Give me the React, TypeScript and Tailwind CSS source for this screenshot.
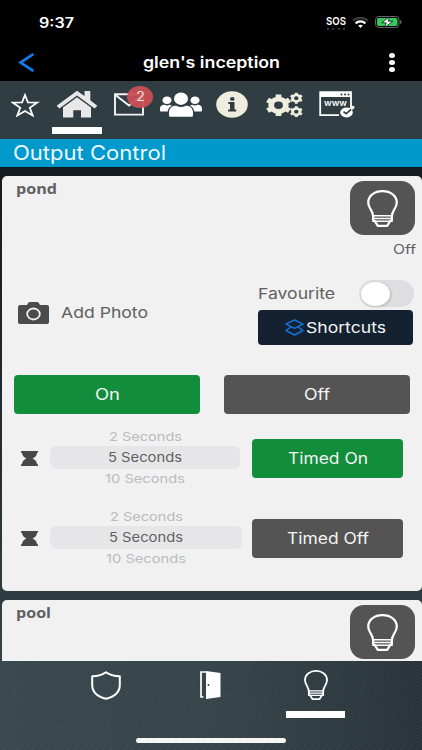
import { useLayoutEffect, useRef, useState } from "react";
import type { ReactNode } from "react";

const inter = "font-['Inter','Liberation_Sans',sans-serif]";
const open = "font-['Open_Sans','Noto_Sans',sans-serif]";

// A single line of text spread horizontally to fill the given width.
function Wide({ w, className = "", children }: { w: number; className?: string; children: string }) {
  const ref = useRef<HTMLSpanElement>(null);
  const [scale, setScale] = useState(1.15);
  useLayoutEffect(() => {
    const fit = () => {
      if (ref.current) setScale(w / ref.current.getBoundingClientRect().width * (new DOMMatrix(getComputedStyle(ref.current).transform).a || 1));
    };
    fit();
    document.fonts?.ready.then(fit);
  }, [w]);
  return (
    <span className={`block shrink-0 text-left ${className}`} style={{ width: w }}>
      <span ref={ref} className="block w-max origin-left whitespace-nowrap" style={{ transform: `scaleX(${scale})` }}>
        {children}
      </span>
    </span>
  );
}

function Bulb({ className, stroke }: { className: string; stroke: number }) {
  return (
    <svg viewBox="0 0 30 37" preserveAspectRatio="none" className={className} fill="none" stroke="#fff" strokeWidth={stroke} strokeLinejoin="round" strokeLinecap="round">
      <path d="M6 31V26.500C6 20.500 1.200 18.500 1.200 12.400C1.200 5.800 7.200 1.200 15 1.200s13.800 4.600 13.800 11.200c0 6.100-4.800 8.100-4.800 14.100V31h-1.500L19.500 35.800H10.500L7.500 31Z" />
      <path d="M6.200 25.800h17.600M6.200 28.500h17.600M7 31.200h16" strokeWidth={stroke * 0.7} />
    </svg>
  );
}

function BulbTile() {
  return (
    <div className="flex h-[54px] w-[65px] items-center justify-center rounded-[14px] bg-[#545454]">
      <Bulb className="h-[37px] w-[31px]" stroke={2.2} />
    </div>
  );
}

function Hourglass() {
  return (
    <svg viewBox="0 0 17 15" className="ml-[19px] h-[15px] w-[17px] shrink-0" fill="#474747">
      <path d="M0 0h17v1.800h-1C15.800 4.600 14.200 6.500 11.500 7.500c2.700 1 4.300 2.900 4.500 5.700h1V15H0v-1.800h1C1.200 10.400 2.800 8.500 5.500 7.500 2.800 6.500 1.200 4.600 1 1.800H0Z" />
    </svg>
  );
}

function Button({ className, children }: { className: string; children: ReactNode }) {
  return <button className={`flex h-[39px] shrink-0 items-center justify-center rounded-[4px] pt-px text-[15.5px] text-[#f4f4f4] ${className}`}>{children}</button>;
}

function Picker({ className }: { className: string }) {
  return (
    <div className={`ml-3 flex shrink-0 flex-col items-center text-[#bbbbbd] ${className}`}>
      <div className="flex h-[18px] items-center text-[12px]"><Wide w={73}>2 Seconds</Wide></div>
      <div className="flex h-[23px] w-full items-center justify-center rounded-[6px] bg-[#e6e6e8] text-[13px] text-[#606060]"><Wide w={74}>5 Seconds</Wide></div>
      <div className="flex h-[19px] items-center text-[12px]"><Wide w={80}>10 Seconds</Wide></div>
    </div>
  );
}

function StatusBar() {
  return (
    <div className="flex h-[44px] items-center">
      <Wide w={35} className="ml-[39px] text-[14px] font-semibold">9:37</Wide>
      <div className="mt-[2px] ml-[252px] flex w-[20px] flex-col">
        <Wide w={20} className="text-[11px] leading-[11px] font-semibold">SOS</Wide>
        <div className="mt-[1px] flex justify-between px-[1px]">
          {[0, 1, 2, 3].map((i) => <i key={i} className="size-[2px] rounded-full bg-[#48484a]" />)}
        </div>
      </div>
      <svg viewBox="0 0 17 11" className="ml-[6px] h-[11px] w-[17px]" fill="none">
        <path d="M1 3.700C5-.1 12-.1 16 3.700" stroke="#3c3c3e" strokeWidth="2.200" />
        <path d="M3.600 6.300c2.700-2.600 7.100-2.600 9.800 0" stroke="#fff" strokeWidth="2.300" />
        <path d="M6.200 8.500c1.300-1 3.300-1 4.600 0L8.500 11Z" fill="#fff" />
      </svg>
      <svg viewBox="0 0 27 12" className="ml-[6px] h-[12px] w-[27px]">
        <rect x=".5" y=".5" width="23.500" height="11" rx="3.300" fill="none" stroke="#66666a" />
        <rect x="2" y="2" width="20.500" height="8" rx="1.800" fill="#34c759" />
        <path d="M25 4v4c2-.6 2-3.400 0-4Z" fill="#66666a" />
        <path d="M14.500.7 6.800 6.800h4.500L9.700 11.400l8-6.200h-4.600Z" fill="#fff" stroke="#000" strokeWidth=".7" />
      </svg>
    </div>
  );
}

const gearPath = (cx: number, cy: number, r: number, teeth: number) => {
  const points: string[] = [];
  const step = (Math.PI * 2) / teeth;
  for (let i = 0; i < teeth; i++) {
    const profile: [number, number][] = [[-0.29, 0.77], [-0.21, 1], [0.21, 1], [0.29, 0.77], [0.5, 0.79]];
    for (const [t, q] of profile) {
      const a = (i + t + 0.5) * step;
      points.push(`${(cx + Math.cos(a) * r * q).toFixed(2)} ${(cy + Math.sin(a) * r * q).toFixed(2)}`);
    }
  }
  const h = r * 0.34;
  return `M${points.join("L")}ZM${cx - h} ${cy}a${h} ${h} 0 1 0 ${2 * h} 0a${h} ${h} 0 1 0 ${-2 * h} 0Z`;
};

function Navigation() {
  return (
    <nav className="flex h-[58px] shrink-0 items-start bg-[#303d42]">
      <svg viewBox="0 0 29 24" className="mt-[12px] ml-[11px] h-[24px] w-[29px] shrink-0" fill="none" stroke="#fff" strokeWidth="1.800">
        <path d="m14 2 2.900 7.300 9.400.2-7.500 5.300 2.900 7.700-7.700-4.500-7.700 4.500 2.900-7.700-7.500-5.300 9.400-.2Z" />
      </svg>
      <div className="ml-[12px] flex w-[50px] shrink-0 flex-col items-center">
        <svg viewBox="0 0 42 28" className="mt-[9px] h-[28px] w-[42px]" fill="#e8e8e8">
          <path d="m21 .8 7.500 5.200V1h5.800v9.200l7 5.500-2.700 2.800L21 5.500 3.400 18.500.7 15.700Z" />
          <path d="m21 7.200 14 10.300V27.500H25v-7.200h-7.700v7.200H7V17.500Z" />
        </svg>
        <div className="mt-[9px] h-[7px] w-full bg-white" />
      </div>
      <div className="relative mt-[12px] ml-[12px] h-[23px] w-[30px] shrink-0">
        <svg viewBox="0 0 30 23" className="h-[23px] w-[30px]" fill="none" stroke="#f4f4f4" strokeWidth="1.900">
          <path d="M1 1.300h28v20.300H1ZM1.500 2l13.500 10.500L28.500 2" />
        </svg>
        <div className="absolute top-[-7px] left-[13px] flex h-[22px] w-[26px] items-center justify-center rounded-[50%] bg-[#c94f55]/95 text-[13px] text-[#f2dede]"><Wide w={9}>2</Wide></div>
      </div>
      <svg viewBox="0 0 42 25" className="mt-[11px] ml-[16px] h-[25px] w-[42px] shrink-0" fill="#fff">
        <ellipse cx="21" cy="6.700" rx="7" ry="6.200" />
        <path d="M9 23.500v-3c0-5 3.600-6.800 7.200-6.800 2.900 1.700 6.700 1.700 9.600 0 3.600 0 7.200 1.800 7.200 6.800v3c0 1-.7 1.300-1.700 1.300H10.700c-1 0-1.700-.3-1.700-1.300Z" />
        <ellipse cx="7" cy="8.200" rx="4.500" ry="3.800" /><ellipse cx="35" cy="8.200" rx="4.500" ry="3.800" />
        <path d="M0 18.500v-1.700c0-3 2.200-4 4.500-4 1.700.9 3.600.9 5.300 0l2.200.9C9.400 15 8 16.700 7.700 19.500H1Q0 19.500 0 18.500ZM42 18.500v-1.700c0-3-2.200-4-4.500-4-1.700.9-3.600.9-5.300 0l-2.200.9c2.600 1.300 4 3 4.300 5.800H41q1 0 1-1Z" />
      </svg>
      <svg viewBox="0 0 32 27" className="mt-[10px] ml-[14px] h-[27px] w-[32px] shrink-0">
        <ellipse cx="16" cy="13.500" rx="15.800" ry="13.200" fill="#efeddf" />
        <path d="M12.300 10.900h6.200v7.500h1.700v2h-8.100v-2H14v-5.500h-1.700Z" fill="#303d42" />
        <ellipse cx="16.300" cy="7.900" rx="2.300" ry="1.900" fill="#303d42" />
      </svg>
      <svg viewBox="0 0 37 25" className="mt-[11px] ml-[18px] h-[25px] w-[37px] shrink-0" fill="#efeddf" fillRule="evenodd">
        <g transform="translate(12.500 13.300) scale(1.180 1)"><path d={gearPath(0, 0, 11, 6)} /></g>
        <g transform="translate(30.300 6.200) scale(1.180 1)"><path d={gearPath(0, 0, 5.6, 6)} /></g>
        <g transform="translate(30.300 19.700) scale(1.180 1)"><path d={gearPath(0, 0, 5.6, 6)} /></g>
      </svg>
      <svg viewBox="0 0 36 27" className="mt-[10px] ml-[16px] h-[27px] w-[36px] shrink-0">
        <path d="M20 24.200H1.200V1.200H32v15" fill="none" stroke="#fff" strokeWidth="1.800" />
        <path d="M1 1h31v5H1Z" fill="#fff" />
        <g fill="#303d42"><circle cx="22.500" cy="3.400" r="1" /><circle cx="26" cy="3.400" r="1" /><circle cx="29.500" cy="3.400" r="1" /></g>
        <text x="5" y="15.200" fontSize="8.500" fontWeight="600" textLength="23" lengthAdjust="spacingAndGlyphs" fill="#fff">www</text>
        <ellipse cx="27.500" cy="21.500" rx="6.300" ry="4.900" fill="#fff" />
        <path d="m28.500 20.500 5.500-4.200" stroke="#fff" strokeWidth="3" strokeLinecap="round" />
        <path d="m24.500 20.700 2.700 2 5-4.300" fill="none" stroke="#303d42" strokeWidth="1.600" />
      </svg>
    </nav>
  );
}

export default function App() {
  return (
    <div className={`flex h-[750px] w-[422px] flex-col overflow-hidden bg-black text-white ${inter}`}>
      <header className="h-[81px] shrink-0">
        <StatusBar />
        <div className="flex h-[36px] items-center">
          <svg viewBox="0 0 16 19" className="ml-[18px] h-[19px] w-[16px]" fill="none" stroke="#1279e8" strokeWidth="2.800"><path d="M15.500 1 2.500 9.500 15.500 18" /></svg>
          <Wide w={137} className="mt-px ml-[109px] text-[15.5px] font-semibold">glen's inception</Wide>
          <div className="ml-[109px] flex flex-col gap-[2px]">
            {[0, 1, 2].map((i) => <i key={i} className="h-[5px] w-[6px] rounded-[50%] bg-white" />)}
          </div>
        </div>
      </header>
      <Navigation />
      <h1 className="flex h-[28px] shrink-0 items-center bg-[#0099cc] pt-[2px] pl-[13px] text-[19.5px] text-[#f0faff]"><Wide w={153}>Output Control</Wide></h1>
      <main className="flex h-[494px] shrink-0 flex-col gap-[9px] overflow-hidden bg-linear-to-b from-[#141b1f] via-[#202b30] to-[#35434a] pt-[9px] pl-[2px]">
        <section className="h-[415px] shrink-0 rounded-[5px] bg-[#f1f1f1] text-[#606060]">
          <div className="flex h-[64px] justify-between pt-[5px] pr-[7px] pl-[14px]">
            <Wide w={41} className={`text-[13.5px] leading-[16px] font-bold ${open}`}>pond</Wide>
            <BulbTile />
          </div>
          <div className="flex h-[20px] items-center justify-end pr-[6px] text-[12.5px]"><Wide w={23}>Off</Wide></div>
          <div className="mt-[20px] flex h-[65px]">
            <div className="flex w-[256px] items-center pl-[16px] text-[15px]">
              <svg viewBox="0 0 31 22" className="mt-px h-[22px] w-[31px] shrink-0">
                <path d="M2 3h7l1.300-2.200Q10.800 0 12 0h7q1.200 0 1.700.8L22 3h7q2 0 2 2v15q0 2-2 2H2q-2 0-2-2V5q0-2 2-2Z" fill="#4b4b4b" />
                <ellipse cx="15.500" cy="12" rx="6.300" ry="5.500" fill="none" stroke="#f1f1f1" strokeWidth="1.800" />
              </svg>
              <Wide w={87} className="mt-px ml-[12px]">Add Photo</Wide>
            </div>
            <div className="flex w-[156px] flex-col">
              <div className="flex h-[27px] items-center justify-between text-[15px]">
                <Wide w={77} className="mt-[2px]">Favourite</Wide>
                <div className="flex h-[27px] w-[55px] items-center rounded-full bg-[#dedee0] pl-[2px]">
                  <div className="h-[24px] w-[29px] rounded-[50%] bg-white shadow-[1px_1px_3px_#00000030]" />
                </div>
              </div>
              <div className="mt-[3px] flex h-[35px] w-[155px] items-center justify-center gap-[2px] rounded-[4px] bg-[#132131] text-[15px] text-[#f4f4f4]">
                <svg viewBox="0 0 19 17" className="h-[17px] w-[19px]" fill="none" stroke="#1474dc" strokeWidth="1.500" strokeLinejoin="round">
                  <path d="m9.500 1 8.500 4.200-8.500 4.200L1 5.200Z" /><path d="m6 7.900-5 3.600 8.500 4.500 8.500-4.500-5-3.600" />
                </svg>
                <Wide w={80} className="mt-px">Shortcuts</Wide>
              </div>
            </div>
          </div>
          <div className="mt-[30px] flex gap-[24px] pl-[12px]">
            <Button className="w-[186px] bg-[#118d3b]"><Wide w={25}>On</Wide></Button>
            <Button className="w-[186px] bg-[#545454]"><Wide w={26}>Off</Wide></Button>
          </div>
          <div className="mt-[14px] flex h-[60px] items-center">
            <Hourglass /><Picker className="w-[190px]" />
            <Button className="ml-[12px] w-[151px] bg-[#118d3b]"><Wide w={80}>Timed On</Wide></Button>
          </div>
          <div className="mt-[20px] flex h-[60px] items-center">
            <Hourglass /><Picker className="w-[192px]" />
            <Button className="ml-[10px] w-[151px] bg-[#545454]"><Wide w={82}>Timed Off</Wide></Button>
          </div>
        </section>
        <section className="flex h-[61px] shrink-0 justify-between rounded-t-[5px] bg-[#f1f1f1] pt-[5px] pr-[7px] pl-[14px] text-[#606060]">
          <Wide w={35} className={`text-[13.5px] leading-[16px] font-bold ${open}`}>pool</Wide>
          <BulbTile />
        </section>
      </main>
      <footer className="flex h-[89px] shrink-0 flex-col items-center bg-[repeating-linear-gradient(155deg,#ffffff06_0px,#ffffff06_1px,#00000008_2px,#00000008_3px),linear-gradient(to_right,#3a484f,#36444a_55%,#28343a)]">
        <div className="flex h-[56px] w-full items-start">
          <svg viewBox="0 0 30 29" className="mt-[10px] ml-[91px] h-[29px] w-[30px]" fill="none" stroke="#fff" strokeWidth="2" strokeLinejoin="round">
            <path d="M15 1.200Q10 5 1.200 5.300V14C1.200 21 6 25.500 15 27.800 24 25.500 28.800 21 28.800 14V5.300Q20 5 15 1.200Z" />
          </svg>
          <svg viewBox="0 0 21 28" className="mt-[10px] ml-[79px] h-[28px] w-[21px]">
            <path d="M3.500 26H1V1h6" fill="none" stroke="#fff" strokeWidth="1.700" />
            <path d="M6 0 20.500 2v24L6 28Z" fill="#fff" /><circle cx="8.500" cy="14" r="1" fill="#36444a" />
          </svg>
          <div className="ml-[65px] flex w-[59px] flex-col items-center">
            <Bulb className="mt-[9px] h-[30px] w-[24px]" stroke={2.2} />
            <div className="mt-[11px] h-[7px] w-full bg-white" />
          </div>
        </div>
        <div className="mt-[21px] h-[5px] w-[150px] rounded-full bg-[#f5f5f5]" />
      </footer>
    </div>
  );
}
